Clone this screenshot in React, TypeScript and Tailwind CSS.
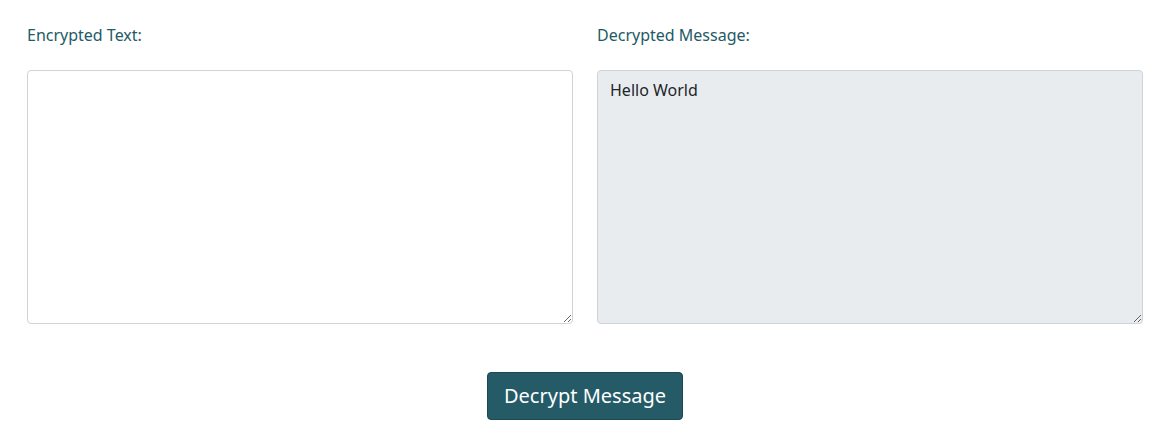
export default function App() {
  return (
    <div className="w-[1165px] h-[433px] bg-white font-['Noto_Sans',sans-serif] pl-[27px] pr-[22px] pt-[24px]">
      <div className="grid grid-cols-2 gap-[24px]">
        <div className="flex flex-col">
          <label className="text-[16px] leading-[22px] text-[#235a66] mb-[24px]">Encrypted Text:</label>
          <textarea className="h-[254px] w-full rounded-[4px] border border-[#ced4da] bg-white px-[12px] py-[8px] text-[16px] text-[#212529] outline-none resize-y" />
        </div>
        <div className="flex flex-col">
          <label className="text-[16px] leading-[22px] text-[#235a66] mb-[24px]">Decrypted Message:</label>
          <textarea
            readOnly
            defaultValue="Hello World"
            className="h-[254px] w-full rounded-[4px] border border-[#ced4da] bg-[#e9ecef] px-[12px] py-[7px] text-[16px] leading-[24px] text-[#212529] outline-none resize-y"
          />
        </div>
      </div>
      <div className="flex justify-center mt-[48px]">
        <button className="h-[48px] px-[16px] rounded-[4px] border border-[#1b4a54] bg-[#245b67] text-white text-[20px] leading-[30px]">
          Decrypt Message
        </button>
      </div>
    </div>
  );
}
